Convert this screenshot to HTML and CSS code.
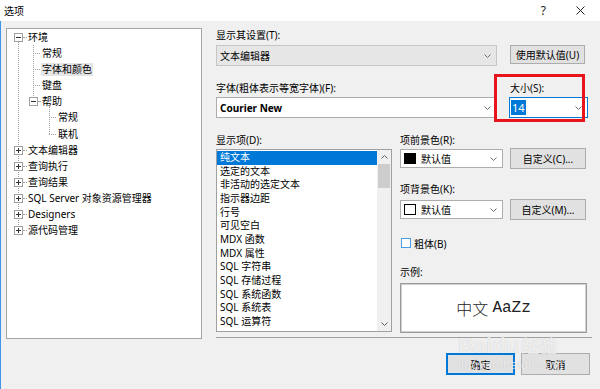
FILE: index.html
```html
<!DOCTYPE html>
<html lang="zh-CN">
<head>
    <meta charset="UTF-8">
    <title>选项</title>
    <link rel="stylesheet" href="styles.css">
</head>
<body>
    <div class="window">
        <div class="titlebar">
            <span class="title">选项</span>
            <span class="help">?</span>
            <svg class="close" width="9" height="9" viewBox="0 0 9 9"><path d="M0.5 0.5 L8.5 8.5 M8.5 0.5 L0.5 8.5" stroke="#222" stroke-width="1" fill="none"/></svg>
        </div>

        <div class="client">
            <div class="main">
                <!-- 左侧树 -->
                <div class="tree">
                    <div class="vline v0"></div>
                    <div class="vline v1"></div>
                    <div class="vline v2"></div>

                    <div class="node l0"><span class="exp minus"></span><span class="stub"></span><span class="lbl">环境</span></div>
                    <div class="node l1 leaf"><span class="stub"></span><span class="lbl">常规</span></div>
                    <div class="node l1 leaf"><span class="stub"></span><span class="lbl selected">字体和颜色</span></div>
                    <div class="node l1 leaf"><span class="stub"></span><span class="lbl">键盘</span></div>
                    <div class="node l1 parent"><span class="exp minus"></span><span class="stub"></span><span class="lbl">帮助</span></div>
                    <div class="node l2 leaf"><span class="stub"></span><span class="lbl">常规</span></div>
                    <div class="node l2 leaf"><span class="stub"></span><span class="lbl">联机</span></div>
                    <div class="node l0"><span class="exp plus"></span><span class="stub"></span><span class="lbl">文本编辑器</span></div>
                    <div class="node l0"><span class="exp plus"></span><span class="stub"></span><span class="lbl">查询执行</span></div>
                    <div class="node l0"><span class="exp plus"></span><span class="stub"></span><span class="lbl">查询结果</span></div>
                    <div class="node l0"><span class="exp plus"></span><span class="stub"></span><span class="lbl">SQL Server 对象资源管理器</span></div>
                    <div class="node l0"><span class="exp plus"></span><span class="stub"></span><span class="lbl">Designers</span></div>
                    <div class="node l0"><span class="exp plus"></span><span class="stub"></span><span class="lbl">源代码管理</span></div>
                </div>

                <!-- 右侧设置 -->
                <div class="right">
                    <div class="label">显示其设置(T):</div>
                    <div class="row1">
                        <div class="combo wide disabled">
                            <span>文本编辑器</span>
                            <svg class="chev" width="7" height="4" viewBox="0 0 7 4"><path d="M0.5 0.5 L3.5 3.5 L6.5 0.5" fill="none" stroke="#707070"/></svg>
                        </div>
                        <button class="btn">使用默认值(U)</button>
                    </div>

                    <div class="row2">
                        <div>
                            <div class="label">字体(粗体表示等宽字体)(F):</div>
                            <div class="combo wide">
                                <b>Courier New</b>
                                <svg class="chev" width="7" height="4" viewBox="0 0 7 4"><path d="M0.5 0.5 L3.5 3.5 L6.5 0.5" fill="none" stroke="#707070"/></svg>
                            </div>
                        </div>
                        <div class="size">
                            <div class="label">大小(S):</div>
                            <div class="combo focus">
                                <span class="sel">14</span>
                                <svg class="chev" width="7" height="4" viewBox="0 0 7 4"><path d="M0.5 0.5 L3.5 3.5 L6.5 0.5" fill="none" stroke="#707070"/></svg>
                            </div>
                        </div>
                    </div>

                    <div class="lower">
                        <div class="items-col">
                            <div class="label">显示项(D):</div>
                            <div class="listbox">
                                <ul class="items">
                                    <li class="active">纯文本</li>
                                    <li>选定的文本</li>
                                    <li>非活动的选定文本</li>
                                    <li>指示器边距</li>
                                    <li>行号</li>
                                    <li>可见空白</li>
                                    <li>MDX 函数</li>
                                    <li>MDX 属性</li>
                                    <li>SQL 字符串</li>
                                    <li>SQL 存储过程</li>
                                    <li>SQL 系统函数</li>
                                    <li>SQL 系统表</li>
                                    <li>SQL 运算符</li>
                                </ul>
                                <div class="scrollbar">
                                    <div class="arrow"><svg width="7" height="4" viewBox="0 0 7 4"><path d="M0.5 3.5 L3.5 0.5 L6.5 3.5" fill="none" stroke="#606060"/></svg></div>
                                    <div class="thumb"></div>
                                    <div class="track"></div>
                                    <div class="arrow"><svg width="7" height="4" viewBox="0 0 7 4"><path d="M0.5 0.5 L3.5 3.5 L6.5 0.5" fill="none" stroke="#606060"/></svg></div>
                                </div>
                            </div>
                        </div>

                        <div class="props-col">
                            <div class="label">项前景色(R):</div>
                            <div class="prow">
                                <div class="combo color">
                                    <span class="swatch black"></span><span class="cval">默认值</span>
                                    <svg class="chev" width="7" height="4" viewBox="0 0 7 4"><path d="M0.5 0.5 L3.5 3.5 L6.5 0.5" fill="none" stroke="#707070"/></svg>
                                </div>
                                <button class="btn">自定义(C)...</button>
                            </div>

                            <div class="label gap13">项背景色(K):</div>
                            <div class="prow second">
                                <div class="combo color">
                                    <span class="swatch white"></span><span class="cval">默认值</span>
                                    <svg class="chev" width="7" height="4" viewBox="0 0 7 4"><path d="M0.5 0.5 L3.5 3.5 L6.5 0.5" fill="none" stroke="#707070"/></svg>
                                </div>
                                <button class="btn">自定义(M)...</button>
                            </div>

                            <div class="check"><span class="box"></span>粗体(B)</div>

                            <div class="label gap15">示例:</div>
                            <div class="sample"><span class="sample-cn">中文</span>&nbsp;<span class="sample-en">AaZz</span></div>
                        </div>
                    </div>

                    <div class="separator"></div>
                </div>
            </div>

            <div class="footer">
                <button class="btn primary">确定</button>
                <button class="btn">取消</button>
            </div>
        </div>

        <!-- 标注框 -->
        <div class="annotation"></div>

        <div class="watermark">
            <div class="wm-big">Baidu<span class="wm-cn">经验</span></div>
            <div class="wm-small">jingyan.baidu.com</div>
        </div>
    </div>
</body>
</html>
```

FILE: styles.css
```css
* {
    margin: 0;
    padding: 0;
    box-sizing: border-box;
}

body {
    width: 600px;
    height: 389px;
    overflow: hidden;
    background-color: #f0f0f0;
    font-family: "Noto Sans", "Noto Sans CJK SC", sans-serif;
    font-size: 10px;
    color: #000;
}

.window {
    position: relative;
    width: 600px;
    height: 389px;
    display: flex;
    flex-direction: column;
}

/* 标题栏 */
.titlebar {
    height: 21px;
    background-color: #fff;
    display: flex;
    align-items: center;
    padding-left: 4px;
}

.title {
    flex: 1;
    font-size: 10px;
}

.help {
    font-size: 12px;
    color: #222;
    margin-right: 30px;
}

.close {
    margin-right: 15px;
}

.client {
    flex: 1;
    background-color: #f0f0f0;
    border-left: 1px solid #3d97e6;
}

.main {
    display: flex;
    padding: 7px 0 0 5px;
}

/* 树 */
.tree {
    position: relative;
    width: 196px;
    height: 311px;
    background-color: #fff;
    border: 1px solid #a5a5a5;
}

.vline {
    position: absolute;
    border-left: 1px dotted #a0a0a0;
}

.v0 { left: 11px; top: 12px; height: 190px; }
.v1 { left: 26px; top: 16px; height: 57px; }
.v2 { left: 42px; top: 77px; height: 28px; }

.node {
    height: 16.17px;
    display: flex;
    align-items: center;
    white-space: nowrap;
}

.l0 { padding-left: 7px; }
.l1.leaf { padding-left: 26px; }
.l1.parent { padding-left: 22px; }
.l2 { padding-left: 42px; }

.exp {
    position: relative;
    z-index: 1;
    flex: none;
    width: 9px;
    height: 9px;
    border: 1px solid #a0a0a0;
    background-color: #fff;
}

.exp::before {
    content: "";
    position: absolute;
    left: 1px;
    top: 3px;
    width: 5px;
    height: 1px;
    background-color: #333;
}

.exp.plus::after {
    content: "";
    position: absolute;
    left: 3px;
    top: 1px;
    width: 1px;
    height: 5px;
    background-color: #333;
}

.stub {
    flex: none;
    height: 0;
    border-top: 1px dotted #a0a0a0;
}

.l0 .stub { width: 4px; }
.l1.parent .stub { width: 2px; margin-right: 1px; }
.leaf .stub { width: 7px; margin-right: 1px; }

.lbl {
    padding: 0 1px;
    line-height: 13px;
}

.lbl.selected {
    background-color: #e5e5e5;
}

/* 右侧 */
.right {
    margin-left: 14px;
    width: 376px;
}

.label {
    height: 14px;
    line-height: 14px;
    white-space: nowrap;
}

.row1 {
    display: flex;
    align-items: flex-start;
    margin-top: 3px;
}

.combo {
    height: 21px;
    display: flex;
    align-items: center;
    justify-content: space-between;
    padding: 0 5px 0 3px;
    background-color: #fff;
    border: 1px solid #adadad;
    white-space: nowrap;
}

.combo.wide {
    width: 281px;
}

.combo.disabled {
    background-color: #e6e6e6;
    border-color: #c6c6c6;
}

.combo b {
    font-weight: 700;
}

.btn {
    height: 19px;
    width: 75px;
    margin-left: 13px;
    background-color: #e1e1e1;
    border: 1px solid #adadad;
    font-family: inherit;
    font-size: 10px;
    color: #000;
    white-space: nowrap;
}

.row2 {
    display: grid;
    grid-template-columns: 281px 79px;
    column-gap: 12px;
    margin-top: 15px;
}

.row2 .combo {
    margin-top: 2px;
}

.size .label {
    padding-left: 1px;
}

.combo.focus {
    border-color: #0078d7;
    padding-left: 1px;
}

.sel {
    background-color: #0078d7;
    color: #fff;
    padding: 0 1px;
    line-height: 15px;
    font-size: 11px;
}

.lower {
    display: flex;
    margin-top: 15px;
}

.items-col {
    width: 176px;
}

.listbox {
    margin-top: 2px;
    height: 183px;
    display: flex;
    background-color: #fff;
    border: 1px solid #a0a0a0;
}

.items {
    list-style: none;
    width: 160px;
    padding-top: 1px;
}

.items li {
    height: 13.67px;
    line-height: 13.67px;
    padding-left: 3px;
    white-space: nowrap;
}

.items li.active {
    background-color: #0078d7;
    color: #fff;
}

.scrollbar {
    width: 14px;
    display: flex;
    flex-direction: column;
    background-color: #f0f0f0;
}

.arrow {
    height: 14px;
    display: flex;
    align-items: center;
    justify-content: center;
}

.thumb {
    height: 24px;
    margin: 0 1px;
    background-color: #cdcdcd;
}

.track {
    flex: 1;
}

.props-col {
    margin-left: 8px;
    width: 188px;
}

.prow {
    display: flex;
    align-items: center;
    height: 21px;
    margin-top: 1px;
}

.prow.second {
    margin-top: 3px;
}

.prow .btn {
    height: 21px;
    width: 76px;
    margin-left: 7px;
}

.combo.color {
    width: 103px;
    height: 19px;
    justify-content: flex-start;
}

.combo.color .chev {
    margin-left: auto;
}

.swatch {
    width: 12px;
    height: 11px;
    margin-right: 5px;
}

.swatch.black {
    background-color: #000;
}

.swatch.white {
    background-color: #fff;
    border: 1px solid #000;
}

.gap13 { margin-top: 13px; }
.gap15 { margin-top: 15px; }

.check {
    display: flex;
    align-items: center;
    height: 14px;
    margin-top: 16px;
}

.box {
    width: 10px;
    height: 10px;
    margin: 0 3px 0 1px;
    background-color: #fff;
    border: 1px solid #4a9de8;
}

.sample {
    margin-top: 4px;
    width: 187px;
    height: 50px;
    display: flex;
    align-items: center;
    justify-content: center;
    background-color: #fff;
    border: 1px solid #9a9a9a;
    box-shadow: inset 0 0 0 1px #d0d0d0;
    font-size: 16px;
    color: #222;
    white-space: pre;
}

.sample-cn {
    font-family: "Noto Sans CJK SC", sans-serif;
    font-weight: 300;
}

.sample-en {
    font-family: "Liberation Mono", monospace;
}

.separator {
    margin-top: 4px;
    height: 1px;
    background-color: #a0a0a0;
}

/* 底部按钮 */
.footer {
    display: flex;
    justify-content: flex-end;
    gap: 6px;
    margin-top: 14px;
    padding-right: 10px;
}

.footer .btn {
    width: 69px;
    height: 22px;
    margin-left: 0;
}

.btn.primary {
    border: 2px solid #0078d7;
}

/* 红色标注框 */
.annotation {
    position: absolute;
    left: 494px;
    top: 74px;
    width: 91px;
    height: 48px;
    border: 3px solid #e8131b;
}

/* 水印 */
.watermark {
    position: absolute;
    left: 458px;
    top: 333px;
    color: rgba(255, 255, 255, 0.7);
    text-shadow: 0 0 1px rgba(140, 140, 140, 0.45);
    pointer-events: none;
}

.wm-big {
    font-family: "Liberation Sans", sans-serif;
    font-weight: 700;
    font-size: 22px;
    line-height: 24px;
}

.wm-cn {
    font-family: "Noto Sans CJK SC", sans-serif;
    font-size: 18px;
    margin-left: 2px;
}

.wm-small {
    font-family: "Liberation Sans", sans-serif;
    font-size: 12px;
    line-height: 14px;
    letter-spacing: 0.5px;
}
```
